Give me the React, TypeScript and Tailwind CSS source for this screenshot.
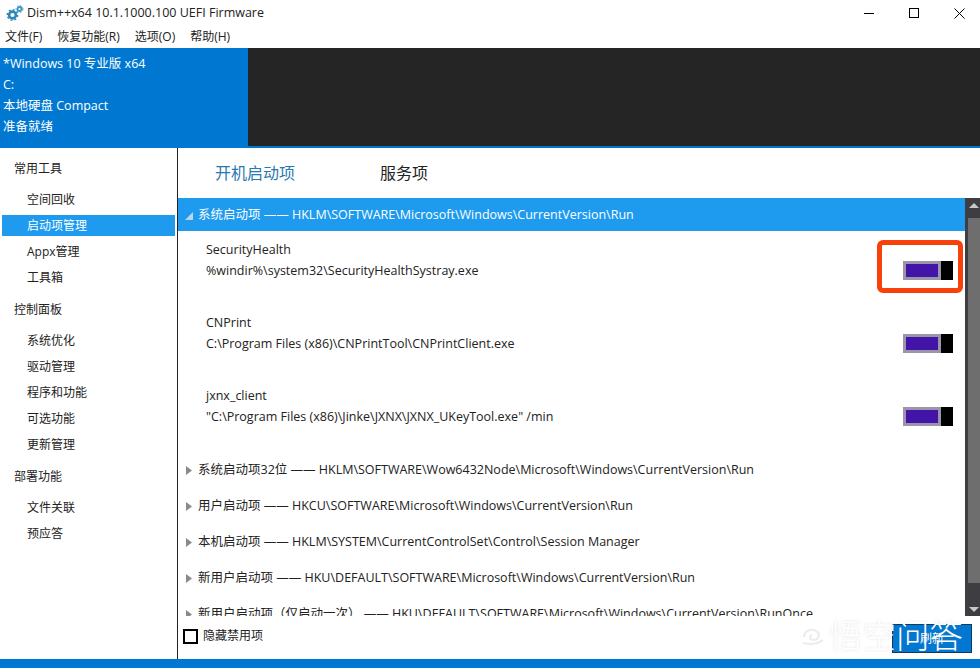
import type { ReactNode } from 'react'

const cjk = "font-['Open_Sans','Noto_Sans_CJK_SC',sans-serif]"

const sidebar = [
  { title: '常用工具', items: ['空间回收', '启动项管理', 'Appx管理', '工具箱'] },
  { title: '控制面板', items: ['系统优化', '驱动管理', '程序和功能', '可选功能', '更新管理'] },
  { title: '部署功能', items: ['文件关联', '预应答'] },
]

const entries = [
  { name: 'SecurityHealth', path: '%windir%\\system32\\SecurityHealthSystray.exe' },
  { name: 'CNPrint', path: 'C:\\Program Files (x86)\\CNPrintTool\\CNPrintClient.exe' },
  { name: 'jxnx_client', path: '"C:\\Program Files (x86)\\Jinke\\JXNX\\JXNX_UKeyTool.exe" /min' },
]

const groups = [
  '系统启动项32位 —— HKLM\\SOFTWARE\\Wow6432Node\\Microsoft\\Windows\\CurrentVersion\\Run',
  '用户启动项 —— HKCU\\SOFTWARE\\Microsoft\\Windows\\CurrentVersion\\Run',
  '本机启动项 —— HKLM\\SYSTEM\\CurrentControlSet\\Control\\Session Manager',
  '新用户启动项 —— HKU\\DEFAULT\\SOFTWARE\\Microsoft\\Windows\\CurrentVersion\\Run',
  '新用户启动项（仅启动一次） —— HKU\\DEFAULT\\SOFTWARE\\Microsoft\\Windows\\CurrentVersion\\RunOnce',
]

function GearIcon() {
  return (
    <svg width="18" height="18" viewBox="0 0 18 18" className="shrink-0">
      <circle cx="6.5" cy="11" r="3.4" fill="none" stroke="#2f86b8" strokeWidth="2.6" />
      <circle cx="6.5" cy="11" r="5.2" fill="none" stroke="#2f86b8" strokeWidth="1.4" strokeDasharray="2 2" />
      <circle cx="13.5" cy="5" r="2" fill="none" stroke="#3a95c4" strokeWidth="1.8" />
      <circle cx="13.5" cy="5" r="3.4" fill="none" stroke="#3a95c4" strokeWidth="1" strokeDasharray="1.6 1.6" />
    </svg>
  )
}

function Toggle() {
  return (
    <div className="mt-[30px] flex h-[19px] w-[50px] shrink-0 items-stretch">
      <div className="flex-1 border-[3px] border-[#9a95a8] bg-[#4314a8]" />
      <div className="w-[12px] bg-black" />
    </div>
  )
}

function GroupRow({ children }: { children: ReactNode }) {
  return (
    <div className="flex h-[36px] shrink-0 items-center pt-[2px] pl-[8px] text-[12.5px] whitespace-nowrap text-[#222]">
      <svg width="6" height="9" viewBox="0 0 6 9" className="mr-[6px] shrink-0">
        <path d="M0 0L6 4.5L0 9Z" fill="#8a8a8a" />
      </svg>
      {children}
    </div>
  )
}

export default function App() {
  return (
    <div className={`relative flex h-[668px] w-[980px] flex-col overflow-hidden bg-white ${cjk}`}>
      <div className="flex h-[26px] shrink-0 items-center pl-[6px]">
        <GearIcon />
        <span className="ml-[3px] text-[12.5px] text-[#222]">Dism++x64 10.1.1000.100 UEFI Firmware</span>
        <div className="ml-auto flex items-center gap-[3px]">
          <div className="flex w-[42px] justify-center">
            <div className="h-px w-[10px] bg-black" />
          </div>
          <div className="flex w-[42px] justify-center">
            <div className="h-[10px] w-[10px] border border-black" />
          </div>
          <div className="flex w-[42px] justify-center">
            <svg width="11" height="11" viewBox="0 0 11 11">
              <path d="M0.5 0.5L10.5 10.5M10.5 0.5L0.5 10.5" stroke="#000" strokeWidth="1" />
            </svg>
          </div>
        </div>
      </div>

      <div className="flex h-[22px] shrink-0 items-center gap-[15px] pl-[5px] text-[12px] text-[#222]">
        <span>文件(F)</span>
        <span>恢复功能(R)</span>
        <span>选项(O)</span>
        <span>帮助(H)</span>
      </div>

      <div className="flex h-[100px] shrink-0 border-b-2 border-[#0078d2] bg-[#252526]">
        <div className="flex w-[248px] flex-col bg-[#0078d2] pt-[5px] pl-[3px] text-[12.5px] text-white">
          <div className="h-[21px] leading-[21px]">*Windows 10 专业版 x64</div>
          <div className="h-[21px] leading-[21px]">C:</div>
          <div className="h-[21px] leading-[21px]">本地硬盘 Compact</div>
          <div className="h-[21px] leading-[21px]">准备就绪</div>
        </div>
      </div>

      <div className="flex min-h-0 flex-1">
        <aside className="w-[178px] shrink-0 border-r border-[#222] pt-[10px] text-[12px] text-[#222]">
          {sidebar.map((section) => (
            <div key={section.title} className="mb-[11px]">
              <div className="flex h-[21px] items-center pl-[14px]">{section.title}</div>
              <div className="mt-[10px] flex flex-col gap-[5px]">
                {section.items.map((item) => (
                  <div
                    key={item}
                    className={
                      item === '启动项管理'
                        ? 'mx-[2px] flex h-[21px] items-center bg-[#1e9aee] pl-[25px] text-white'
                        : 'flex h-[21px] items-center pl-[27px]'
                    }
                  >
                    {item}
                  </div>
                ))}
              </div>
            </div>
          ))}
        </aside>

        <main className="relative flex min-w-0 flex-1 flex-col">
          <div className="flex h-[50px] shrink-0 items-center pl-[37px] text-[16px]">
            <span className="text-[#2a78b0]">开机启动项</span>
            <span className="ml-[85px] text-[#222]">服务项</span>
          </div>

          <div className="flex h-[418px] shrink-0">
            <div className="min-w-0 flex-1 overflow-hidden">
              <div className="flex h-[33px] items-center bg-[#1e9aee] pt-[2px] pl-[7px] text-[12.5px] whitespace-nowrap text-white">
                <svg width="8" height="8" viewBox="0 0 8 8" className="mr-[5px] shrink-0">
                  <path d="M8 0V8H0Z" fill="#b9d6ea" />
                </svg>
                系统启动项 —— HKLM\SOFTWARE\Microsoft\Windows\CurrentVersion\Run
              </div>
              {entries.map((entry) => (
                <div key={entry.name} className="flex h-[73px] items-start pr-[12px] pl-[28px] text-[12.5px] text-[#222]">
                  <div className="mt-[8px] min-w-0 flex-1 leading-[21px]">
                    <div>{entry.name}</div>
                    <div>{entry.path}</div>
                  </div>
                  <Toggle />
                </div>
              ))}
              <div className="h-px" />
              {groups.map((group) => (
                <GroupRow key={group}>{group}</GroupRow>
              ))}
            </div>
            <div className="flex w-[15px] shrink-0 flex-col bg-[#3e3e42]">
              <div className="flex h-[20px] items-start justify-center pt-[5px] pl-[3px]">
                <div className="h-0 w-0 border-x-[5px] border-b-[5px] border-x-transparent border-b-[#c8c8c8]" />
              </div>
              <div className="ml-[3px] h-[365px] bg-[#6e6e6e]" />
              <div className="flex flex-1 items-end justify-center pb-[4px] pl-[3px]">
                <div className="h-0 w-0 border-x-[5px] border-t-[5px] border-x-transparent border-t-[#c8c8c8]" />
              </div>
            </div>
          </div>

          <div className="flex flex-1 items-start pl-[5px]">
            <div className="mt-[11px] flex items-center text-[12px] text-[#222]">
              <div className="h-[15px] w-[15px] border-2 border-black" />
              <span className="ml-[5px]">隐藏禁用项</span>
            </div>
            <div className="mt-[8px] mr-[8px] ml-auto flex h-[29px] w-[80px] items-center justify-center border border-[#123a5c] bg-[#0078d2] text-[12px] text-white">
              刷新
            </div>
          </div>
        </main>
      </div>

      <div className="h-[9px] shrink-0 bg-[#0078d2]" />

      {/* annotation drawn over the screenshot */}
      <div className="absolute top-[240px] left-[877px] h-[53px] w-[86px] rounded-[6px] border-[5px] border-[#f8400c]" />

      {/* watermark */}
      <div className="absolute top-[616px] left-[801px] flex h-[40px] items-center text-[33.5px] leading-none font-light text-white [text-shadow:0_0_3px_rgba(120,120,120,0.22)]">
        <svg width="24" height="22" viewBox="0 0 24 22" className="mr-[4px]">
          <path d="M3 12C3 6 10 3 15 6C20 9 18 15 12 15C9 15 8 11 11 10M2 18C8 20 16 19 22 15" fill="none" stroke="#ececec" strokeWidth="2.2" />
        </svg>
        <span>悟空问答</span>
      </div>
    </div>
  )
}
